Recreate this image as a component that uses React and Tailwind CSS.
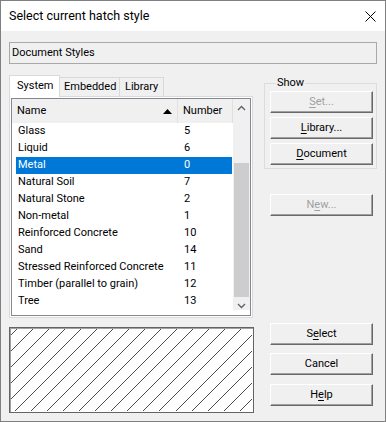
import React from "react";

// rows as shown in the list (scrolled to the bottom)
const styles = [
  ["Glass", "5"],
  ["Liquid", "6"],
  ["Metal", "0"],
  ["Natural Soil", "7"],
  ["Natural Stone", "2"],
  ["Non-metal", "1"],
  ["Reinforced Concrete", "10"],
  ["Sand", "14"],
  ["Stressed Reinforced Concrete", "11"],
  ["Timber (parallel to grain)", "12"],
  ["Tree", "13"],
];

function Btn({ children, disabled, className = "" }) {
  return (
    <div
      className={
        "w-[103px] h-[22px] flex items-center justify-center bg-[#f0f0f0] border border-t-white border-l-white border-b-[#696969] border-r-[#696969] shadow-[inset_-1px_-1px_0_#a0a0a0] " +
        (disabled ? "text-[#a0a0a0] " : "text-black ") +
        className
      }
    >
      {children}
    </div>
  );
}

function Chevron({ up }) {
  return (
    <svg width="9" height="6" viewBox="0 0 9 6">
      <polyline
        points={up ? "1,5 4.5,1.5 8,5" : "1,1 4.5,4.5 8,1"}
        fill="none"
        stroke="#606060"
        strokeWidth="1.3"
      />
    </svg>
  );
}

function Hatch() {
  const w = 241;
  const h = 82;
  const lines = [];
  for (let x = 5.5 - 16 * 6; x < w + h; x += 16) {
    lines.push(<line key={x} x1={x - h} y1={h} x2={x} y2={0} stroke="#000" strokeWidth="0.7" />);
  }
  return (
    <svg width={w} height={h} shapeRendering="crispEdges">
      {lines}
    </svg>
  );
}

export default function App() {
  return (
    <div className="w-[386px] h-[422px] bg-[#f0f0f0] border border-[#7f7f7f] flex flex-col font-['Roboto','Liberation_Sans',sans-serif] text-[11px] text-black">
      {/* title bar */}
      <div className="h-[30px] bg-white flex items-center justify-between pl-[8px] pr-[9px] shrink-0">
        <span className="text-[12.5px]">Select current hatch style</span>
        <svg width="11" height="11" viewBox="0 0 11 11">
          <path d="M0.5 0.5 L10.5 10.5 M10.5 0.5 L0.5 10.5" stroke="#000" strokeWidth="1" />
        </svg>
      </div>

      <div className="flex-1 px-[8px]">
        <div className="mt-[11px] w-[368px] h-[22px] border border-[#a9a9a9] pl-[2px] flex items-center">
          Document Styles
        </div>

        <div className="mt-[11px] flex">
          {/* left column */}
          <div className="w-[244px]">
            <div className="h-[21px] flex items-end relative z-10">
              <div className="w-[51px] h-[22px] -mb-[1px] bg-white border border-b-0 border-[#d9d9d9] pl-[7px] leading-[20px]">
                System
              </div>
              <div className="w-[60px] h-[19px] border border-b-0 border-l-0 border-[#d9d9d9] pl-[4px] leading-[18px]">
                Embedded
              </div>
              <div className="w-[44px] h-[19px] border border-b-0 border-l-0 border-[#d9d9d9] pl-[5px] leading-[18px]">
                Library
              </div>
            </div>

            <div className="h-[222px] bg-white border border-[#d9d9d9] p-[1px]">
              <div className="h-full border border-[#828790] flex">
                <div className="w-[221px]">
                  <div className="h-[24px] bg-[#f0f0f0] flex">
                    <div className="w-[166px] border-r border-[#e0e0e0] pl-[5px] pr-[5px] flex items-center justify-between">
                      <span>Name</span>
                      <svg width="9" height="5" viewBox="0 0 9 5">
                        <polygon points="0,5 4.5,0 9,5" fill="#000" />
                      </svg>
                    </div>
                    <div className="w-[55px] border-r border-[#e0e0e0] pl-[5px] flex items-center">Number</div>
                  </div>
                  {styles.map(([name, num]) => (
                    <div
                      key={name}
                      className={
                        "ml-[4px] w-[216px] h-[17px] flex items-center " +
                        (name === "Metal" ? "bg-[#0078d7] text-white" : "")
                      }
                    >
                      <span className="w-[162px] pl-[2px]">{name}</span>
                      <span className="pl-[6px]">{num}</span>
                    </div>
                  ))}
                </div>
                {/* scrollbar */}
                <div className="w-[17px] h-[211px] bg-[#f0f0f0] flex flex-col">
                  <div className="h-[17px] flex items-center justify-center">
                    <Chevron up />
                  </div>
                  <div className="h-[47px]" />
                  <div className="h-[134px] mx-[1px] bg-[#cdcdcd]" />
                  <div className="h-[13px] flex items-end justify-center pb-[1px]">
                    <Chevron />
                  </div>
                </div>
              </div>
            </div>

            <div className="mt-[9px] w-[245px] h-[86px] bg-white border border-[#646464] shadow-[inset_1px_1px_0_#a0a0a0] p-[1px] overflow-hidden">
              <Hatch />
            </div>
          </div>

          {/* right column */}
          <div className="ml-[11px] w-[115px] flex flex-col">
            <fieldset className="mt-[1px] border border-[#dcdcdc] pl-[5px] pb-[3px]">
              <legend className="ml-[6px] px-[1px] leading-[14px]">Show</legend>
              <div className="mt-[1px] flex flex-col gap-[4px]">
                <Btn disabled>
                  <span className="underline underline-offset-[2px]">S</span>et...
                </Btn>
                <Btn>
                  <span className="underline underline-offset-[2px]">L</span>ibrary...
                </Btn>
                <Btn>
                  <span className="underline underline-offset-[2px]">D</span>ocument
                </Btn>
              </div>
            </fieldset>
            <Btn disabled className="mt-[25px] ml-[6px]">
              N<span className="underline underline-offset-[2px]">e</span>w...
            </Btn>
            <Btn className="mt-[107px] ml-[6px]">
              S<span className="underline underline-offset-[2px]">e</span>lect
            </Btn>
            <Btn className="mt-[8px] ml-[6px]">Cancel</Btn>
            <Btn className="mt-[9px] ml-[6px]">
              H<span className="underline underline-offset-[2px]">e</span>lp
            </Btn>
          </div>
        </div>
      </div>
    </div>
  );
}
